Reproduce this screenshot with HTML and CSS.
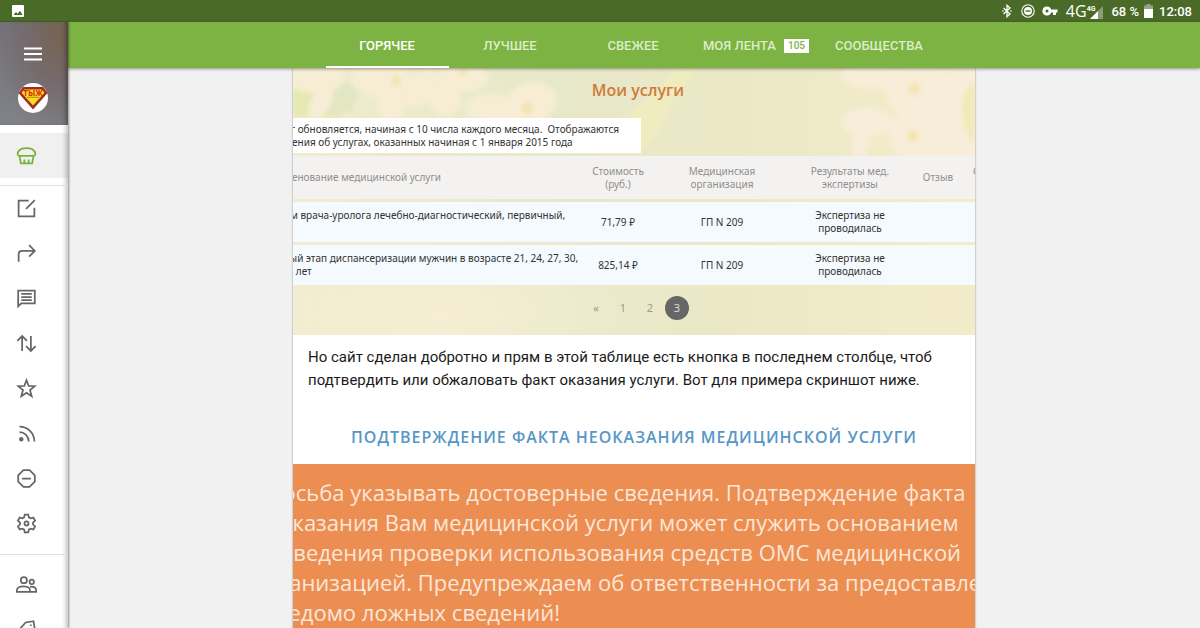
FILE: index.html
```html
<!DOCTYPE html>
<html lang="ru">
<head>
<meta charset="utf-8">
<meta name="viewport" content="width=device-width, initial-scale=1">
<title>Горячее</title>
<link rel="stylesheet" href="styles.css">
</head>
<body>
<div class="app">
  <div class="status">
    <svg class="status-pic" viewBox="0 0 12 12" role="img" aria-label="Изображение"><rect width="12" height="12" rx="1" fill="#fff"/><path d="M1.5 10 4 7l1.6 1.8L8 5.8l2.6 4.2z" fill="#4a6a28"/></svg>
    <div class="status-right">
      <svg class="i-bt" viewBox="0 0 10 14" fill="none" stroke="#fff" stroke-width="1.3"><path d="M1.5 4 8 10 5 12.7V1.3L8 4 1.5 10"/><path d="M.4 7h1.2M8.4 7h1.2"/></svg>
      <svg class="i-dnd" viewBox="0 0 14 14" fill="none" stroke="#fff"><circle cx="7" cy="7" r="6.2" stroke-width="1.1"/><circle cx="7" cy="7" r="4" fill="#fff" stroke="none"/><path d="M4.6 7h4.8" stroke="#4a6a28" stroke-width="1.4"/></svg>
      <svg class="i-key" viewBox="0 0 16 10" fill="#fff"><path fill-rule="evenodd" d="M5 .5a4.5 4.5 0 1 0 4.2 6H11V9h3V6.500h1.500v-3H9.200A4.500 4.500 0 0 0 5 .5zm0 3a1.500 1.500 0 1 1 0 3 1.500 1.500 0 0 1 0-3z"/></svg>
      <span class="net">4G</span>
      <span class="signal"><span class="net-small">4G</span><svg class="i-signal" viewBox="0 0 13 13"><path d="M13 0v13H0z" fill="#fff" opacity=".35"/><path d="M8 5v8H0z" fill="#fff"/></svg></span>
      <span class="pct">68 %</span>
      <svg class="i-bat" viewBox="0 0 9 14"><path d="M2.500 0h4v1.500H9V14H0V1.500h2.500z" fill="#fff" opacity=".4"/><path d="M0 5h9v9H0z" fill="#fff"/></svg>
      <span class="time">12:08</span>
    </div>
  </div>

  <div class="body">
    <aside class="side">
      <div class="side-head">
        <button class="burger" aria-label="Меню"><svg viewBox="0 0 18 14" stroke="#fff" stroke-width="2"><path d="M0 1.500h18M0 7h18M0 12.500h18"/></svg></button>
        <svg class="avatar" viewBox="0 0 30 30" role="img" aria-label="Профиль"><circle cx="15" cy="15" r="15" fill="#fff"/><path d="M5 4h20l4.500 6L15 26.500.5 10z" fill="#a42a22"/><path d="M6 6.500h18l2.500 3.300L15 22.500 3.500 9.800z" fill="#f7e01a"/><text x="15" y="12.500" class="avatar-text" text-anchor="middle">ТЫЖ</text><path d="M9 14.300h12" stroke="#c8751c"/></svg>
      </div>
      <nav class="menu" aria-label="Разделы">
        <a class="item active" href="#" aria-label="Главная"><svg viewBox="0 0 24 24"><path d="M4 12.500C0 12.500 1 3.500 12 3.500s12 9 8 9zM4 12.500 5.500 21h13L20 12.500M9.500 16.500V21M14.500 16.500V21"/></svg></a>
        <div class="line"></div>
        <a class="item" href="#" aria-label="Написать"><svg viewBox="0 0 24 24"><path d="M14.500 3H3v18h18V11M11.500 12.500 21.500 2.500"/></svg></a>
        <a class="item" href="#" aria-label="Ответы"><svg viewBox="0 0 24 24"><path d="M3 21.500V13c0-2.500 1-4 4-4h14M15 2.500 21.500 9 15 15.500"/></svg></a>
        <a class="item" href="#" aria-label="Комментарии"><svg viewBox="0 0 24 24"><path d="M2.500 21V3h19v14.500H6zM6 6.800h12M6 10.300h12M6 13.800h12"/></svg></a>
        <a class="item" href="#" aria-label="Оценки"><svg viewBox="0 0 24 24"><path d="M7 20.500V4M1.500 9 7 3.500 12.500 9M17 3.500V20M11.500 15l5.500 5.500 5.500-5.500"/></svg></a>
        <a class="item" href="#" aria-label="Избранное"><svg viewBox="0 0 24 24"><path d="m12 2.500 2.500 6.600 7 .3-5.500 4.400 1.900 6.900L12 16.800l-5.900 3.900L8 13.800 2.500 9.400l7-.3z"/></svg></a>
        <a class="item" href="#" aria-label="Подписки"><svg viewBox="0 0 24 24"><path d="M4 4a17 17 0 0 1 17 17M4 10.500A10.500 10.500 0 0 1 14.500 21"/><circle cx="6" cy="18.500" r="2.500" class="fill"/></svg></a>
        <a class="item" href="#" aria-label="Игнор-лист"><svg viewBox="0 0 24 24"><path d="M8.500 2.500h7l6 6v7l-6 6h-7l-6-6v-7zM7 12h10"/></svg></a>
        <a class="item" href="#" aria-label="Настройки"><svg viewBox="0 0 24 24"><path d="M10 1.800h4l.7 3.200 2 1.100 3.100-.9 2 3.500-2.400 2.200v2.200l2.400 2.200-2 3.500-3.100-.9-2 1.100-.7 3.200h-4l-.7-3.200-2-1.100-3.100.9-2-3.500 2.400-2.200v-2.200L2.200 8.700l2-3.500 3.100.9 2-1.100z"/><circle cx="12" cy="12" r="2.300"/></svg></a>
        <div class="line low"></div>
        <a class="item" href="#" aria-label="Сообщества"><svg viewBox="0 0 24 24"><circle cx="9" cy="7" r="3.500"/><circle cx="18" cy="9" r="2.500"/><path d="M1 20.500v-2c0-6 15-6 15 0v2zM16 20.500h7v-2.500c0-3-4-4-7-3.300"/></svg></a>
        <a class="item" href="#" aria-label="Теги"><svg viewBox="0 0 24 24"><path d="m3 13 8-9 9-1.500L21.500 12l-8 9z"/><circle cx="17" cy="7" r="1" class="fill"/></svg></a>
      </nav>
    </aside>

    <div class="content">
      <nav class="tabs" aria-label="Лента">
        <a class="tab on" href="#">ГОРЯЧЕЕ</a>
        <a class="tab" href="#">ЛУЧШЕЕ</a>
        <a class="tab" href="#">СВЕЖЕЕ</a>
        <a class="tab" href="#">МОЯ ЛЕНТА <span class="badge">105</span></a>
        <a class="tab" href="#">СООБЩЕСТВА</a>
      </nav>
      <main class="feed">
        <article class="post">
          <section class="services">
            <svg class="flowers" viewBox="0 0 682 267" preserveAspectRatio="none" aria-hidden="true">
              <defs><filter id="soft"><feGaussianBlur stdDeviation="2"/></filter></defs>
              <g filter="url(#soft)">
                <path d="M0 8 28 22 62 42 40 50 0 48z" fill="#e6e8b4"/><path d="M40 12 70 18 58 44 34 46z" fill="#e2e6c2"/>
                <g fill="#f6edd4">
                  <ellipse cx="22" cy="10" rx="30" ry="15"/><ellipse cx="28" cy="34" rx="10" ry="20" transform="rotate(25 28 34)"/>
                  <ellipse cx="88" cy="12" rx="30" ry="17"/><ellipse cx="98" cy="36" rx="14" ry="18"/><ellipse cx="128" cy="20" rx="14" ry="22" transform="rotate(40 128 20)"/>
                  <ellipse cx="170" cy="10" rx="26" ry="14"/><ellipse cx="152" cy="32" rx="16" ry="16"/><ellipse cx="200" cy="40" rx="28" ry="14"/><ellipse cx="240" cy="32" rx="24" ry="18"/><ellipse cx="228" cy="56" rx="30" ry="22"/>
                </g>
                <path d="M408 0h-24l-46 46v42c20-6 34-32 42-58z" fill="#efecc0"/>
                <g fill="#f7edd8">
                  <ellipse cx="580" cy="8" rx="32" ry="13"/><ellipse cx="626" cy="22" rx="34" ry="28"/><ellipse cx="574" cy="54" rx="26" ry="15"/><ellipse cx="569" cy="72" rx="9" ry="22" transform="rotate(15 569 72)"/><ellipse cx="634" cy="68" rx="38" ry="34"/><ellipse cx="668" cy="50" rx="28" ry="54"/>
                </g>
                <path d="M682 14c-16 8-18 42 0 62z" fill="#efeab8"/>
                <g fill="#f3e4b4"><circle cx="103" cy="13" r="5"/><circle cx="234" cy="40" r="6"/><circle cx="170" cy="4" r="4"/><circle cx="621" cy="21" r="6"/><circle cx="620" cy="68" r="6"/></g>
              </g>
            </svg>
            <h2 class="services-title">Мои услуги</h2>
            <p class="notice">услуг обновляется, начиная с 10 числа каждого месяца.&nbsp; Отображаются<br>сведения об услугах, оказанных начиная с 1 января 2015 года</p>
            <table class="table">
              <colgroup><col class="c-name"><col class="c-cost"><col class="c-org"><col class="c-result"><col class="c-review"><col class="c-more"></colgroup>
              <thead><tr><th>Наименование медицинской услуги</th><th>Стоимость<br>(руб.)</th><th>Медицинская<br>организация</th><th class="result">Результаты мед.<br>экспертизы</th><th>Отзыв</th><th>Статус<br>&nbsp;</th></tr></thead>
              <tbody>
                <tr><td>Прием врача-уролога лечебно-диагностический, первичный,<br>&nbsp;</td><td>71,79 ₽</td><td>ГП N 209</td><td class="result">Экспертиза не<br>проводилась</td><td></td><td></td></tr>
                <tr><td>Первый этап диспансеризации мужчин в возрасте 21, 24, 27, 30,<br>33, 36 лет</td><td>825,14 ₽</td><td>ГП N 209</td><td class="result">Экспертиза не<br>проводилась</td><td></td><td></td></tr>
              </tbody>
            </table>
            <nav class="pages" aria-label="Страницы"><a href="#">«</a><a href="#">1</a><a href="#">2</a><a class="current" href="#" aria-current="page">3</a></nav>
          </section>
          <p class="text">Но сайт сделан добротно и прям в этой таблице есть кнопка в последнем столбце, чтоб подтвердить или обжаловать факт оказания услуги. Вот для примера скриншот ниже.</p>
          <section class="confirm">
            <h2 class="confirm-title">ПОДТВЕРЖДЕНИЕ ФАКТА НЕОКАЗАНИЯ МЕДИЦИНСКОЙ УСЛУГИ</h2>
            <p class="warning">Просьба указывать достоверные сведения. Подтверждение факта<br>неоказания Вам медицинской услуги может служить основанием<br>проведения проверки использования средств ОМС медицинской<br>организацией. Предупреждаем об ответственности за предоставление<br>заведомо ложных сведений!</p>
          </section>
        </article>
      </main>
    </div>
  </div>
</div>
</body>
</html>
```

FILE: styles.css
```css
* { box-sizing: border-box; }
body { margin: 0; font-family: Roboto, "Noto Sans", sans-serif; background: #f1f1f1; }
h2, p { margin: 0; }
a { color: inherit; text-decoration: none; }
svg { display: block; flex: none; }

.app { height: 100vh; display: flex; flex-direction: column; overflow: hidden; }

.status { flex: none; height: 22px; padding: 0 8px 0 12px; display: flex; align-items: center; justify-content: space-between; background: #4a6a28; color: #fff; font-size: 13px; }
.status-pic { width: 12px; height: 12px; }
.status-right { display: flex; align-items: center; }
.i-bt { width: 10px; height: 14px; margin-right: 9px; }
.i-dnd { width: 14px; height: 14px; margin-right: 7px; }
.i-key { width: 16px; height: 10px; margin-right: 8px; }
.net { font-family: "Open Sans", sans-serif; font-size: 16px; font-weight: 400; line-height: 20px; }
.signal { display: flex; align-items: flex-end; }
.net-small { font-size: 7px; font-weight: 700; line-height: 14px; align-self: flex-start; margin-right: -5px; height: 17px; margin-top: -2px; }
.i-signal { width: 13px; height: 13px; }
.pct { margin: 0 5px 0 8px; font-weight: 500; }
.i-bat { width: 9px; height: 14px; margin-right: 6px; }
.time { font-weight: 500; }

.body { flex: 1; min-height: 0; display: flex; }
.side { position: relative; z-index: 2; flex: none; width: 68px; background: #fff; box-shadow: 1px 0 2px rgba(0,0,0,.4), inset -5px 0 5px -3px rgba(0,0,0,.25); overflow: hidden; }
.side-head { height: 103px; padding: 25px 3px 0 0; display: flex; flex-direction: column; align-items: center; gap: 22px; background: radial-gradient(ellipse at 90% 10%, #76644f 0, #75696a 35%, rgba(120,120,128,0) 80%), linear-gradient(#74757c, #808288); box-shadow: inset -5px 0 5px -3px rgba(0,0,0,.4); }
.burger { width: 18px; height: 14px; padding: 0; border: 0; background: none; }
.burger svg { width: 18px; height: 14px; }
.avatar { width: 30px; height: 30px; }
.avatar-text { font: 700 8px "Open Sans", sans-serif; fill: #d22a14; }
.menu { padding-top: 8px; }
.item { height: 45px; padding-left: 16px; display: flex; align-items: center; }
.item svg { width: 21px; height: 21px; fill: none; stroke: #666; stroke-width: 2; }
.item .fill { fill: #666; stroke: none; }
.active { background: rgba(0,0,0,.06); }
.active svg { stroke: #76b33c; }
.line { height: 1px; margin: 7px 0 0; background: #ddd; }
.low { margin: 8px 0 7px; }

.content { flex: 1; min-width: 0; display: flex; flex-direction: column; background: #f1f1f1; }
.tabs { position: relative; z-index: 1; flex: none; height: 46px; padding-right: 2px; display: flex; justify-content: center; background: #7cb342; box-shadow: 0 1px 3px rgba(0,0,0,.4); }
.tab { width: 123px; padding-top: 3px; display: flex; align-items: center; justify-content: center; gap: 8px; border-bottom: 2px solid transparent; color: #dcedc8; font-size: 13px; font-weight: 500; white-space: nowrap; }
.on { color: #fff; border-color: #fff; }
.badge { padding: 0 4px; background: #fff; color: #7cb342; font-size: 10px; line-height: 14px; }

.feed { flex: 1; min-height: 0; overflow: hidden; display: flex; justify-content: center; }
.post { width: 682px; max-width: 100%; overflow: hidden; background: #fff; box-shadow: 0 0 2px rgba(0,0,0,.4); align-self: flex-start; }

.services { position: relative; height: 267px; overflow: hidden; font-family: "Noto Sans", "Open Sans", sans-serif; font-size: 10px; line-height: 13px; color: #333; background: radial-gradient(ellipse at 22% 92%, #f5eed4 0, rgba(245,238,212,0) 32%), linear-gradient(90deg, #f1ecce, #e7e8c9 40%, #ece8c6 65%, #f2ecca); }
.flowers { position: absolute; inset: 0; width: 100%; height: 100%; }
.services-title, .notice, .table, .pages { position: relative; }
.services-title { height: 50px; padding: 10px 0 0 8px; text-align: center; font-family: "Open Sans", sans-serif; font-size: 16px; line-height: 24px; font-weight: 600; color: #d17a39; }
.notice { width: 376px; margin-left: -28px; padding: 5px 0 4px 5px; background: #fff; white-space: nowrap; }
.table { width: 754px; margin-left: -28px; table-layout: fixed; border-collapse: separate; border-spacing: 0 3px; white-space: nowrap; }
.c-name { width: 301px; }
.c-cost { width: 104px; }
.c-org { width: 104px; }
.c-result { width: 144px; }
.c-review { width: 40px; }
.table th, .table td { height: 40px; padding: 0; text-align: center; }
.table th { height: 43px; background: #f3f2f1; color: #8f8f8f; font-weight: 400; }
.table td { background: #f4fafe; }
.table .result { padding-left: 8px; }
.table th:first-child, .table td:first-child { text-align: left; }
.pages { display: flex; justify-content: center; align-items: center; gap: 3px; padding: 8px 0 0 5px; color: #999; font-size: 11px; }
.pages a { width: 24px; line-height: 24px; text-align: center; }
.pages .current { border-radius: 50%; background: #666; color: #ddd; }

.text { padding: 11px 15px 0; height: 80px; font-size: 15px; line-height: 23px; color: #1b1b1b; }

.confirm { overflow: hidden; font-family: "Open Sans", sans-serif; }
.confirm-title { height: 49px; padding-top: 9px; text-align: center; font-size: 16px; line-height: 26px; font-weight: 600; letter-spacing: 1px; color: #5697c6; white-space: nowrap; }
.warning { margin-left: -40px; padding: 13px 0 24px; background: #ec8e52; color: #fbe6d8; font-size: 22px; line-height: 30px; white-space: nowrap; }
```
